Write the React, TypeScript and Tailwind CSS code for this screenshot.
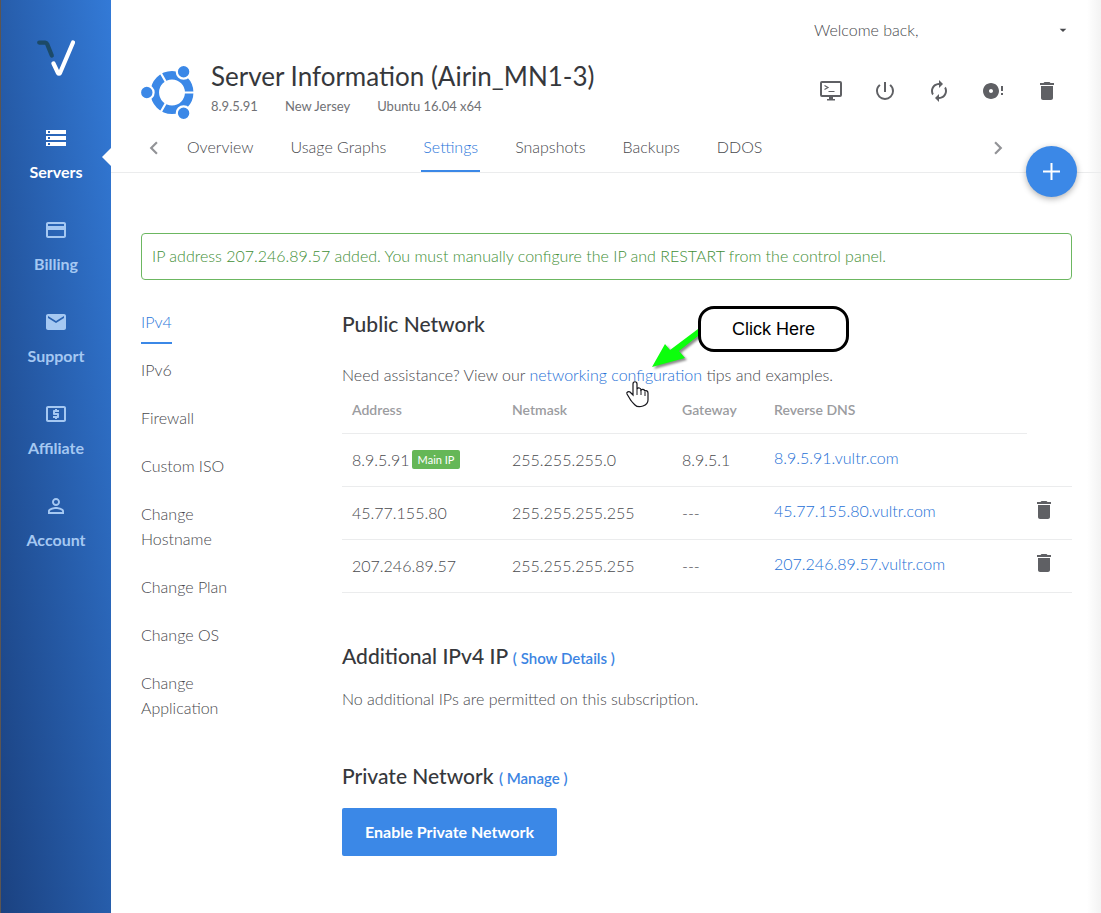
import type { ReactNode } from "react";
import {
  MdArrowDropDown,
  MdAutorenew,
  MdChevronLeft,
  MdChevronRight,
  MdCreditCard,
  MdDiscFull,
  MdEmail,
  MdLocalAtm,
  MdPersonOutline,
  MdPowerSettingsNew,
  MdStorage,
} from "react-icons/md";

function TrashIcon() {
  return (
    <svg viewBox="0 0 24 24" className="size-6" fill="currentColor" aria-hidden="true">
      <path d="M6 19c0 1.1.9 2 2 2h8c1.1 0 2-.9 2-2V7H6v12zM19 4h-3.5l-1-1h-5l-1 1H5v2h14V4z" />
    </svg>
  );
}

function ConsoleIcon() {
  return (
    <svg viewBox="0 0 24 24" className="size-6" fill="none" stroke="currentColor" aria-hidden="true">
      <rect x="2" y="3" width="20" height="14" rx="1" strokeWidth="2" />
      <path d="M10 17h4v3h2v1.6H8V20h2z" fill="currentColor" stroke="none" />
      <path d="M5.500 6.500l3.500 2-3.500 2M9.500 12.500h6" strokeWidth="1.200" />
    </svg>
  );
}

function VultrLogo() {
  return (
    <svg viewBox="0 0 38 36" className="h-9 w-[38px]" fill="none" strokeLinecap="round" strokeLinejoin="round" aria-hidden="true">
      <path d="M2.200 2.600h6q1.300 0 1.900 1.300L14.800 15.500" stroke="#1c4a68" strokeWidth="4.200" />
      <path d="M16.500 23.500l4.500 9.500q1 1.500 2 0L36 2.500" stroke="#fff" strokeWidth="4.200" />
    </svg>
  );
}

function UbuntuLogo() {
  return (
    <svg viewBox="0 0 54 54" className="mt-1 size-[54px] shrink-0" aria-hidden="true">
      <circle cx="31" cy="27.500" r="17.200" fill="none" stroke="#3b88e7" strokeWidth="8.500" />
      <g stroke="#fff" strokeWidth="2.200">
        <path d="M40 27.500h14M26.500 19.700l-7.500-13M26.500 35.300l-7.500 13" />
      </g>
      <g fill="#3b88e7" stroke="#fff" strokeWidth="2.200">
        <circle cx="5.800" cy="27.500" r="6.800" />
        <circle cx="42.600" cy="6.800" r="6.800" />
        <circle cx="42.600" cy="48.200" r="6.800" />
      </g>
    </svg>
  );
}

const mainNav: { label: string; icon: ReactNode }[] = [
  { label: "Servers", icon: <MdStorage size={24} /> },
  { label: "Billing", icon: <MdCreditCard size={24} /> },
  { label: "Support", icon: <MdEmail size={24} /> },
  { label: "Affiliate", icon: <MdLocalAtm size={24} /> },
  { label: "Account", icon: <MdPersonOutline size={24} /> },
];

const actions: { label: string; icon: ReactNode }[] = [
  { label: "View console", icon: <ConsoleIcon /> },
  { label: "Stop server", icon: <MdPowerSettingsNew size={24} /> },
  { label: "Restart server", icon: <MdAutorenew size={24} /> },
  { label: "Reinstall server", icon: <MdDiscFull size={24} /> },
  { label: "Destroy server", icon: <TrashIcon /> },
];

const tabs = ["Overview", "Usage Graphs", "Settings", "Snapshots", "Backups", "DDOS"];

const settings = [
  "IPv4",
  "IPv6",
  "Firewall",
  "Custom ISO",
  "Change Hostname",
  "Change Plan",
  "Change OS",
  "Change Application",
];

const addresses = [
  { ip: "8.9.5.91", netmask: "255.255.255.0", gateway: "8.9.5.1", dns: "8.9.5.91.vultr.com", main: true },
  { ip: "45.77.155.80", netmask: "255.255.255.255", gateway: "---", dns: "45.77.155.80.vultr.com", main: false },
  { ip: "207.246.89.57", netmask: "255.255.255.255", gateway: "---", dns: "207.246.89.57.vultr.com", main: false },
];

function Sidebar() {
  return (
    <aside className="w-[111px] shrink-0 border-l border-[#5c5552] bg-linear-to-bl from-[#337ad7] to-[#1b4281]">
      <a href="#home" aria-label="Vultr home" className="flex justify-center pt-10">
        <VultrLogo />
      </a>
      <nav className="mt-[50px] flex flex-col gap-[34px]">
        {mainNav.map(({ label, icon }) => {
          const active = label === "Servers";
          return (
            <a
              key={label}
              href={`#${label.toLowerCase()}`}
              className={`relative flex h-[58px] flex-col items-center justify-between text-base leading-6 font-bold ${active ? "text-white" : "text-[#a5c8f2]"}`}
            >
              {icon}
              <span>{label}</span>
              {active && (
                <span className="absolute top-[22px] right-0 border-y-9 border-r-9 border-y-transparent border-r-white" />
              )}
            </a>
          );
        })}
      </nav>
    </aside>
  );
}

function Header() {
  return (
    <header className="border-b border-[#ebeced] px-[30px]">
      <div className="flex h-[61px] items-center justify-end">
        <button className="flex w-[257px] items-center justify-between pb-[2px] text-base">
          Welcome back,
          <MdArrowDropDown size={16} />
        </button>
      </div>
      <div className="flex h-[62px] items-start">
        <UbuntuLogo />
        <div className="ml-4 grow">
          <h1 className="text-[26px] leading-[30px] font-normal text-[#36383c]">Server Information (Airin_MN1-3)</h1>
          <p className="mt-[5px] flex gap-[27px] text-[13px] leading-5 font-normal text-[#707175]">
            <span>8.9.5.91</span>
            <span>New Jersey</span>
            <span>Ubuntu 16.04 x64</span>
          </p>
        </div>
        <div className="mt-[18px] mr-3 flex gap-[30px] text-[#5f6064]">
          {actions.map(({ label, icon }) => (
            <button key={label} aria-label={label}>
              {icon}
            </button>
          ))}
        </div>
      </div>
      <div className="relative flex h-[49px] items-stretch">
        <button aria-label="Previous tabs" className="mr-[18px] text-[#929397]">
          <MdChevronLeft size={26} />
        </button>
        <nav className="flex grow gap-[33px]">
          {tabs.map((tab) => (
            <a
              key={tab}
              href={`#${tab.toLowerCase().replace(" ", "-")}`}
              className={`border-b-2 px-[2px] pt-3 text-base leading-6 ${tab === "Settings" ? "border-[#3b88e7] text-[#2b76da]" : "border-transparent"}`}
            >
              {tab}
            </a>
          ))}
        </nav>
        <button aria-label="Next tabs" className="mr-[60px] text-[#929397]">
          <MdChevronRight size={26} />
        </button>
        <button
          aria-label="Deploy new server"
          className="absolute -right-[6px] -bottom-[25px] flex size-[51px] items-center justify-center rounded-full bg-[#3b88e7] text-white shadow-[0_2px_6px_rgba(0,0,0,0.3)]"
        >
          <svg viewBox="0 0 17 17" className="size-[17px]" stroke="currentColor" strokeWidth="2" aria-hidden="true">
            <path d="M0 8.500h17M8.500 0v17" />
          </svg>
        </button>
      </div>
    </header>
  );
}

function Callout() {
  return (
    <div className="pointer-events-none absolute -top-[3px] left-[285px] h-[102px] w-[222px] text-black">
      <svg viewBox="0 0 222 102" className="absolute inset-0 size-full overflow-visible" aria-hidden="true">
        <g className="drop-shadow-[2px_2px_1px_rgba(0,0,0,0.45)]">
          <path d="M71 23v7L52 45l6 7-33 9 13-23 5 6 28-21z" fill="#0cff0c" />
        </g>
        <path
          d="M8 100c-2-2-4-4-5-6l-3-5c-1-2 2-3 3-2l3 3V79c0-3 4-3 4 0v5c1-2 4-1 4 1 1-1 3-1 4 1 1-1 3 0 3 2v7c0 3-2 5-5 6-3 1-6 1-8-1z"
          transform="translate(0 -1)"
          fill="#fff"
          stroke="#16161c"
          strokeWidth="1.200"
        />
        <path d="M10 83v6M14 84v5M18 86v4" stroke="#16161c" />
      </svg>
      <div className="absolute top-0 right-0 flex h-[46px] w-[151px] items-center justify-center rounded-2xl border-3 border-black bg-white font-['Liberation_Sans',Arial,sans-serif] text-lg font-normal">
        Click Here
      </div>
    </div>
  );
}

function AddressTable() {
  return (
    <table className="w-full table-fixed text-left text-base">
      <colgroup>
        <col className="w-40" />
        <col className="w-[170px]" />
        <col className="w-[92px]" />
        <col />
        <col className="w-[45px]" />
      </colgroup>
      <thead>
        <tr className="h-[46px] text-sm text-[#9b9ca0]">
          {["Address", "Netmask", "Gateway", "Reverse DNS"].map((name) => (
            <th key={name} scope="col" className="border-b border-[#ebeced] px-[10px] font-semibold">
              {name}
            </th>
          ))}
        </tr>
      </thead>
      <tbody>
        {addresses.map(({ ip, netmask, gateway, dns, main }) => (
          <tr key={ip} className="h-[53px] border-b border-[#ebeced]">
            <td className="px-[10px]">
              <div className="flex items-center gap-[2px]">
                {ip}
                {main && (
                  <span className="rounded-xs bg-[#65b757] px-[6px] text-[11px] leading-[19px] font-normal text-white">
                    Main IP
                  </span>
                )}
              </div>
            </td>
            <td className="px-[10px]">{netmask}</td>
            <td className="px-[10px]">{gateway}</td>
            <td className="px-[10px] pb-1">
              <a href="#rdns" className="text-[#2470d6]">
                {dns}
              </a>
            </td>
            <td className="pb-[6px] pl-[5px]">
              {!main && (
                <button aria-label={`Delete ${ip}`} className="flex text-[#5f6064]">
                  <TrashIcon />
                </button>
              )}
            </td>
          </tr>
        ))}
      </tbody>
    </table>
  );
}

export default function App() {
  return (
    <div className="flex min-h-screen bg-white font-[Lato,sans-serif] font-light text-[#48494d]">
      <Sidebar />
      <div className="min-w-0 grow bg-[linear-gradient(to_left,#f3f3f3,#ffffff_14px)]">
        <Header />
        <main className="pt-[60px] pr-[29px] pl-[30px]">
          <p role="status" className="flex min-h-[47px] items-center rounded border border-[#6cb761] px-[10px] pb-[2px] text-base text-[#3f8f36]">
            IP address 207.246.89.57 added. You must manually configure the IP and RESTART from the control panel.
          </p>
          <div className="mt-[29px] flex">
            <nav className="flex w-[201px] shrink-0 flex-col items-start gap-[23px] pr-[100px] text-base leading-[25px]">
              {settings.map((item) => (
                <a
                  key={item}
                  href={`#${item.toLowerCase().replace(" ", "-")}`}
                  className={item === "IPv4" ? "-mb-[10px] border-b-2 border-[#3b88e7] pb-2 text-[#2b76da]" : ""}
                >
                  {item}
                </a>
              ))}
            </nav>
            <div className="min-w-0 grow">
              <section className="relative">
                <h2 className="text-[21px] leading-[30px] font-medium text-[#36383c]">Public Network</h2>
                <p className="mt-6 text-base leading-6">
                  Need assistance? View our{" "}
                  <a href="#docs" className="text-[#2470d6]">
                    networking configuration
                  </a>{" "}
                  tips and examples.
                </p>
                <AddressTable />
                <Callout />
              </section>
              <section className="mt-12">
                <h2 className="text-[21px] leading-[30px] font-medium text-[#36383c]">
                  Additional IPv4 IP{" "}
                  <a href="#details" className="text-[15px] font-semibold text-[#3b84e2]">
                    ( Show Details )
                  </a>
                </h2>
                <p className="mt-[14px] text-base leading-6">No additional IPs are permitted on this subscription.</p>
              </section>
              <section className="mt-[50px]">
                <h2 className="text-[21px] leading-[30px] font-medium text-[#36383c]">
                  Private Network{" "}
                  <a href="#manage" className="text-[15px] font-semibold text-[#3b84e2]">
                    ( Manage )
                  </a>
                </h2>
                <button className="mt-[15px] h-12 rounded-xs bg-[#3b88e7] px-[23px] text-base font-bold text-white">
                  Enable Private Network
                </button>
              </section>
            </div>
          </div>
        </main>
      </div>
    </div>
  );
}
